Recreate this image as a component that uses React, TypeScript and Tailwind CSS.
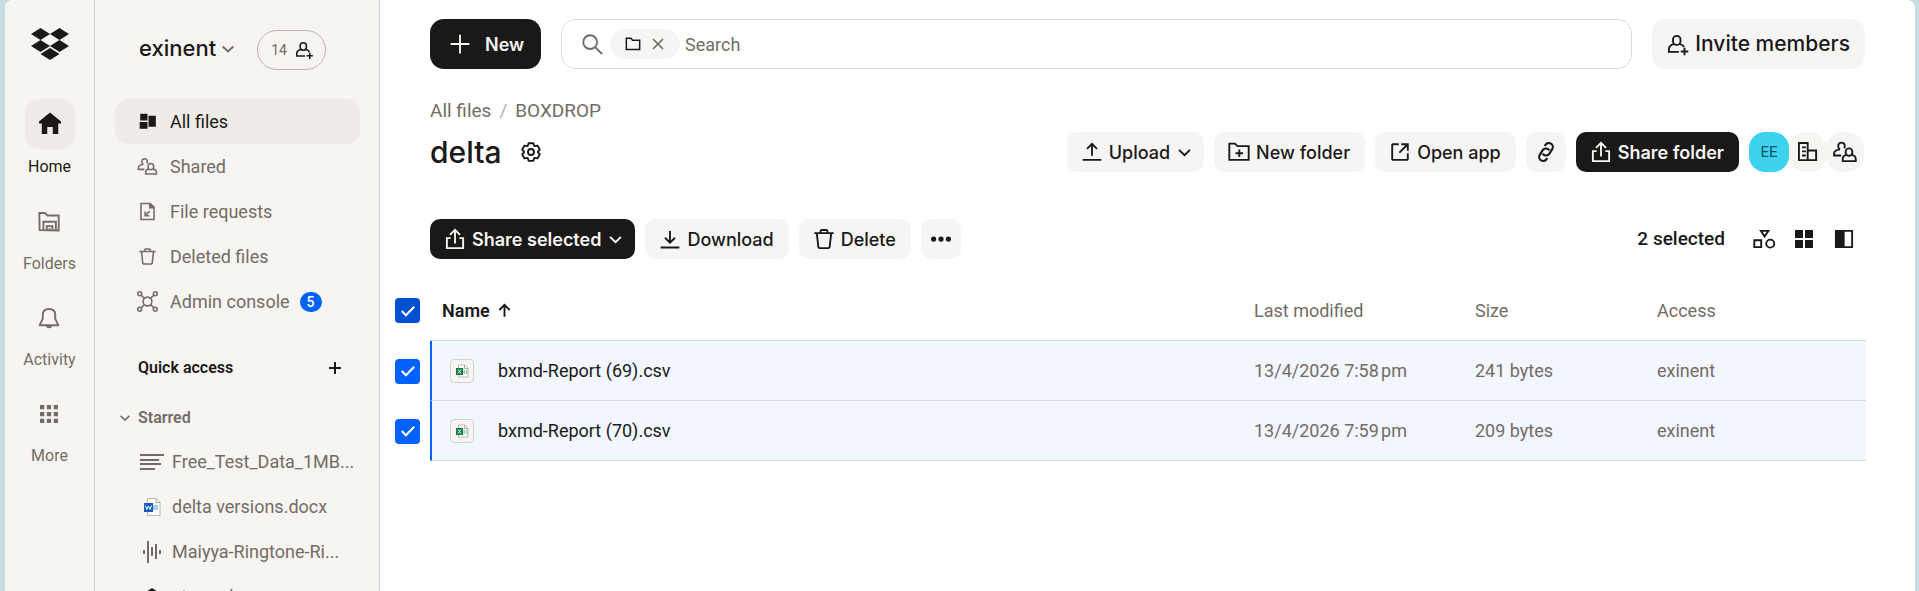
import { useState } from "react";
import type { ReactNode } from "react";

type IconProps = { className?: string; children?: ReactNode };

function Icon({ className = "size-[30px]", children }: IconProps) {
  return (
    <svg
      viewBox="0 0 24 24"
      fill="none"
      stroke="currentColor"
      strokeWidth="1.5"
      className={`shrink-0 ${className}`}
      aria-hidden="true"
    >
      {children}
    </svg>
  );
}

const gearPoints = Array.from({ length: 6 }, (_, i) => {
  const base = -90 + i * 60;
  return [
    [-27, 5.6],
    [-15, 7.3],
    [15, 7.3],
    [27, 5.6],
  ]
    .map(([offset, radius]) => {
      const angle = ((base + offset) * Math.PI) / 180;
      return `${(12 + radius * Math.cos(angle)).toFixed(2)},${(12 + radius * Math.sin(angle)).toFixed(2)}`;
    })
    .join(" ");
}).join(" ");

const GearIcon = () => (
  <Icon>
    <polygon points={gearPoints} strokeLinejoin="round" />
    <circle cx="12" cy="12" r="2.4" />
  </Icon>
);

const ShareIcon = () => (
  <Icon>
    <path d="M8.5 11.25H5.5v8h13v-8h-3M12 15.5V5M8 8.75l4-4 4 4" />
  </Icon>
);

const UploadIcon = () => (
  <Icon>
    <path d="M4.5 18.25h15M12 15V5.75M8 9.5l4-4 4 4" />
  </Icon>
);

const DownloadIcon = () => (
  <Icon>
    <path d="M4.5 18.75h15M12 5.5v9M8 11l4 4 4-4" />
  </Icon>
);

const NewFolderIcon = () => (
  <Icon>
    <path d="M4.25 18.25V5.25h4.5l2 2h9v11zM12.25 10v6M9.25 13h6" />
  </Icon>
);

const OpenIcon = () => (
  <Icon>
    <path d="M11 5.75H6.25l-.5.5v11.5l.5.5h11.5l.5-.5V13M13 5.75h5.25V11M18 6l-6.5 6.5" />
  </Icon>
);

const LinkIcon = () => (
  <Icon>
    <g transform="rotate(-58 12 12)" strokeWidth="1.7">
      <path d="M8.5 15.4H7.4a3.2 3.2 0 0 1 0-6.4h4.200a3.2 3.2 0 0 1 2.9 4.6" />
      <path d="M15.5 8.6h1.1a3.2 3.2 0 0 1 0 6.4h-4.2a3.2 3.2 0 0 1-2.9-4.6" />
    </g>
  </Icon>
);

const TrashIcon = ({ className }: IconProps) => (
  <Icon className={className}>
    <path d="M4.25 7.25h15.5M6.25 7.5l1.25 11 .75.75h7.5l.75-.75 1.25-11M9.25 7V5.5l.75-.75h4l.75.75V7" />
  </Icon>
);

const PeopleIcon = ({ className }: IconProps) => (
  <Icon className={className}>
    <path d="M8 10.1c-.9-.6-1.400-1.600-1.400-2.700 0-1.800 1-2.900 2.600-2.900s2.600 1.100 2.600 2.900c0 .7-.1 1.200-.4 1.700" />
    <path d="M9 14.750H3.250V13.400c0-1.900 1.600-3.100 4.400-3.300" />
    <rect x="12.500" y="9.100" width="5.400" height="6" rx="2.700" />
    <path d="M13.200 14.300c-1.900.4-3 1.500-3 3.200v1.750h10.400V17.500c0-1.700-1.200-2.800-3.100-3.200" />
  </Icon>
);

const PersonAddIcon = ({ className }: IconProps) => (
  <Icon className={className}>
    <rect x="8.800" y="5.500" width="6" height="7.200" rx="3" />
    <path d="M13.500 18.250h-8V16.500c0-2.300 1.500-3.900 4-4.400M14.200 12.100c1.700.3 2.900 1.100 3.500 2.400M18 15v6M15 18h6" />
  </Icon>
);

const BuildingIcon = () => (
  <Icon>
    <path d="M4.750 18.750V4.750h7v14M4.250 18.500h14.250v-7.750h-6.500M7.250 8.250h3M7.250 11.500h3M7.250 14.750h3" />
  </Icon>
);

const ChevronIcon = ({ className }: IconProps) => (
  <Icon className={className}>
    <path d="M6.750 9.500L12 14.500l5.250-5" strokeWidth="1.900" />
  </Icon>
);

const DropboxLogo = () => (
  <svg viewBox="0 0 38 32" className="h-8 w-[38px]" fill="currentColor" aria-hidden="true">
    <path d="M9.500 0L19 6l-9.500 6L0 6zM28.500 0L38 6l-9.500 6L19 6zM9.500 12L19 18l-9.500 6L0 18zM28.500 12L38 18l-9.500 6L19 18zM19 20l9.500 6L19 32l-9.500-6z" />
  </svg>
);

const HomeIcon = () => (
  <Icon>
    <path
      d="M12 2.800L3.200 10v1.500h2.200v8.400h4.400v-5.600h4.400v5.600h4.400v-8.400h2.200V10z"
      fill="currentColor"
      stroke="none"
    />
  </Icon>
);

const FoldersIcon = () => (
  <Icon>
    <path d="M4.500 18.500L4.250 4.750h4.500l2 2h9v12zM7.500 18.500v-6.750h10v6.750M10.250 18.500v-3.250h4.500v3.250" />
    <path d="M12.500 17v2" />
  </Icon>
);

const BellIcon = () => (
  <Icon>
    <path d="M4.500 17.750h15l-2.500-5V9.500c0-3-2-4.750-5-4.750S7 6.500 7 9.500v3.250z" strokeLinejoin="round" />
    <path d="M9.500 18h5c0 1.300-1 2.200-2.500 2.200S9.500 19.300 9.500 18z" fill="currentColor" stroke="none" />
  </Icon>
);

const MoreGridIcon = () => (
  <Icon>
    <path
      d="M4.800 4.800h3.400v3.400H4.800zM10.300 4.800h3.400v3.400h-3.400zM15.800 4.800h3.400v3.400h-3.400zM4.800 10.300h3.400v3.400H4.800zM10.300 10.300h3.400v3.400h-3.400zM15.800 10.300h3.400v3.400h-3.400zM4.800 15.800h3.400v3.400H4.800zM10.300 15.800h3.400v3.400h-3.400zM15.800 15.800h3.400v3.400h-3.400z"
      fill="currentColor"
      stroke="none"
    />
  </Icon>
);

const AllFilesIcon = () => (
  <Icon className="size-[25px]">
    <path
      d="M5 4.500h7v6.500H5zM13 6.500h7v10.500h-7zM4.500 12.500H12V19H4.500z"
      fill="currentColor"
      stroke="none"
    />
  </Icon>
);

const FileRequestIcon = () => (
  <Icon className="size-[25px]">
    <path d="M5.750 4.250h8.500l4 3.500v12H5.750zM14.250 11.500L10 15.750M9.750 12v4h4" />
    <path d="M13.500 4h1.500l3.500 3.500v1.500h-5z" fill="currentColor" stroke="none" />
  </Icon>
);

const AdminIcon = () => (
  <Icon className="size-[25px]">
    <circle cx="12" cy="12" r="4.200" />
    <circle cx="4.500" cy="4.500" r="1.900" />
    <circle cx="19.500" cy="4.500" r="1.900" />
    <circle cx="4.500" cy="19.500" r="1.900" />
    <circle cx="19.500" cy="19.500" r="1.900" />
    <path d="M6 6l3 3M18 6l-3 3M6 18l3-3M18 18l-3-3" />
  </Icon>
);

const TextFileIcon = () => (
  <svg viewBox="0 0 24 16" className="h-4 w-6 shrink-0" fill="currentColor" aria-hidden="true">
    <path d="M0 0h24v2H0zM0 5h19v2H0zM0 9h21v2H0zM0 14h15v2H0z" />
  </svg>
);

const WordIcon = () => (
  <svg viewBox="0 0 24 18" className="h-[18px] w-6 shrink-0" aria-hidden="true">
    <path d="M7.500.500h8.500l4 4v13H7.500z" fill="#fff" stroke="#b9b9b9" />
    <path d="M16 .500v4h4" fill="none" stroke="#a5a5a5" />
    <path d="M13 7h5v5h-5z" fill="#a9cdf3" />
    <rect x="4" y="5" width="9" height="9" fill="#185abd" />
    <path d="M5.500 7.500l1.300 4 1.700-3.500 1.700 3.500 1.300-4" fill="none" stroke="#fff" />
  </svg>
);

const AudioIcon = () => (
  <svg viewBox="0 0 24 22" className="h-[22px] w-6 shrink-0" fill="currentColor" aria-hidden="true">
    <path d="M3 9h2v4H3zM7 0h2v22H7zM11 6h2v9h-2zM15 3h2v15h-2zM19 9h2v4h-2z" />
  </svg>
);

const BoxIcon = () => (
  <svg viewBox="0 0 24 22" className="h-[22px] w-6 shrink-0 text-[#1a1918]" fill="currentColor" aria-hidden="true">
    <path d="M12 2l9 6v8l-9 6-9-6V8z" />
  </svg>
);

const SheetIcon = () => (
  <span className="flex size-6 items-center justify-center rounded border border-[#d6d3ce] bg-[#f7f5f2]">
    <svg viewBox="0 0 14 14" className="size-[14px]" aria-hidden="true">
      <path d="M3.500 1h6l3.500 3v9H3.500z" fill="#fff" stroke="#bbb" />
      <path d="M9.500 1v3.500H13" fill="none" stroke="#aaa" />
      <path d="M8.500 6h1.500v4H8.500zM11 6h1.500v4H11z" fill="#8fd0ab" />
      <rect x="1" y="4" width="7" height="7" fill="#107c41" />
      <path d="M3 5.500l3 4M6 5.500l-3 4" stroke="#fff" fill="none" />
    </svg>
  </span>
);

const railItems = [
  { label: "Folders", icon: <FoldersIcon /> },
  { label: "Activity", icon: <BellIcon /> },
  { label: "More", icon: <MoreGridIcon /> },
];

const navItems = [
  { label: "Shared", icon: <PeopleIcon className="size-[25px]" /> },
  { label: "File requests", icon: <FileRequestIcon /> },
  { label: "Deleted files", icon: <TrashIcon className="size-[25px]" /> },
  { label: "Admin console", icon: <AdminIcon />, badge: 5 },
];

const starredItems = [
  { label: "Free_Test_Data_1MB...", icon: <TextFileIcon /> },
  { label: "delta versions.docx", icon: <WordIcon /> },
  { label: "Maiyya-Ringtone-Ri...", icon: <AudioIcon /> },
  { label: "stround", icon: <BoxIcon /> },
];

const files = [
  { name: "bxmd-Report (69).csv", modified: "13/4/2026 7:58\u202fpm", size: "241 bytes", access: "exinent" },
  { name: "bxmd-Report (70).csv", modified: "13/4/2026 7:59\u202fpm", size: "209 bytes", access: "exinent" },
];

function Rail() {
  return (
    <nav className="flex w-[90px] shrink-0 flex-col items-center border-r border-[#cfcfcf] pt-7 text-base">
      <a href="#" aria-label="Dropbox" className="text-[#1a1918]">
        <DropboxLogo />
      </a>
      <a href="#" className="mt-[39px] flex flex-col items-center text-[#1a1918]">
        <span className="flex size-[50px] items-center justify-center rounded-[14px] bg-[#efece8]">
          <HomeIcon />
        </span>
        <span className="mt-1.5 leading-6">Home</span>
      </a>
      <div className="mt-7 flex flex-col gap-[15px]">
        {railItems.map((item) => (
          <a key={item.label} href="#" className="flex flex-col items-center text-[#736c64]">
            {item.icon}
            <span className="mt-[15px] pb-3 leading-6">{item.label}</span>
          </a>
        ))}
      </div>
    </nav>
  );
}

function Sidebar() {
  return (
    <aside className="flex w-[285px] shrink-0 flex-col border-r border-[#cfcfcf] pr-[19px] pl-5 text-[18px] text-[#736c64]">
      <div className="flex h-[99px] shrink-0 items-center pl-6">
        <button className="flex items-center pb-0.5 font-[Inter,sans-serif] text-[22px] font-medium text-[#1a1918]">
          exinent
          <ChevronIcon className="size-6 text-[#736c64]" />
        </button>
        <button className="mr-[34px] ml-auto flex h-10 w-[69px] items-center justify-center gap-1 rounded-full border border-[#bdb5ad] pl-1 text-sm">
          14
          <PersonAddIcon className="size-[25px] text-[#1a1918]" />
        </button>
      </div>
      <a
        href="#"
        className="flex h-[45px] shrink-0 items-center gap-2.5 rounded-[14px] bg-[#efece8] pl-5 text-[#1a1918]"
      >
        <AllFilesIcon />
        All files
      </a>
      {navItems.map((item) => (
        <a key={item.label} href="#" className="flex h-[45px] shrink-0 items-center gap-2.5 pl-5">
          {item.icon}
          {item.label}
          {item.badge && (
            <span className="flex h-5 w-[22px] items-center justify-center rounded-full bg-[#0061fe] text-sm font-medium text-white">
              {item.badge}
            </span>
          )}
        </a>
      ))}
      <div className="mt-[21px] flex h-[45px] shrink-0 items-center justify-between pr-[13px] pl-[23px] text-[#1a1918]">
        <h2 className="text-base font-semibold">Quick access</h2>
        <button aria-label="Add to quick access">
          <Icon className="size-6">
            <path d="M12 6v12M6 12h12" strokeWidth="2" />
          </Icon>
        </button>
      </div>
      <button className="mt-[5px] flex h-[45px] shrink-0 items-center gap-[3px] text-base font-semibold">
        <ChevronIcon className="size-5" />
        Starred
      </button>
      <div className="-mt-px flex flex-col">
        {starredItems.map((item) => (
          <a key={item.label} href="#" className="flex h-[45px] shrink-0 items-center gap-2 pl-[25px]">
            {item.icon}
            {item.label}
          </a>
        ))}
      </div>
    </aside>
  );
}

type ButtonProps = { dark?: boolean; children: ReactNode };

function ToolButton({ dark, children }: ButtonProps) {
  return (
    <button
      className={`flex h-10 items-center gap-0.5 rounded-[10px] pr-[15px] pl-2.5 font-[Inter,sans-serif] text-[18px] ${
        dark ? "bg-[#1a1918] font-semibold text-[#f7f5f2]" : "bg-[#f6f5f3] font-medium text-[#1a1918]"
      }`}
    >
      {children}
    </button>
  );
}

type CheckboxProps = { label: string; checked: boolean; dark?: boolean; onChange: () => void };

function Checkbox({ label, checked, dark, onChange }: CheckboxProps) {
  return (
    <span className="grid size-[25px] place-items-center">
      <input
        type="checkbox"
        aria-label={label}
        checked={checked}
        onChange={onChange}
        className={`col-start-1 row-start-1 size-[25px] appearance-none rounded border border-[#bdb5ad] checked:border-transparent ${
          dark ? "checked:bg-[#0050d0]" : "checked:bg-[#0061fe]"
        }`}
      />
      {checked && (
        <Icon className="pointer-events-none col-start-1 row-start-1 size-5 text-white">
          <path d="M4.500 12l5 5L19.500 7" strokeWidth="2.500" />
        </Icon>
      )}
    </span>
  );
}

function FileTable({ selected, setSelected }: { selected: string[]; setSelected: (names: string[]) => void }) {
  const allSelected = selected.length === files.length;

  const toggle = (name: string) => {
    setSelected(selected.includes(name) ? selected.filter((n) => n !== name) : [...selected, name]);
  };

  return (
    <table className="mt-[21px] w-full table-fixed border-separate border-spacing-0 text-left text-[18px] text-[#736c64]">
      <colgroup>
        <col className="w-[35px]" />
        <col />
        <col className="w-[221px]" />
        <col className="w-[182px]" />
        <col className="w-[209px]" />
      </colgroup>
      <thead>
        <tr className="h-[61px]">
          <th>
            <Checkbox
              dark
              label="Select all"
              checked={allSelected}
              onChange={() => setSelected(allSelected ? [] : files.map((f) => f.name))}
            />
          </th>
          <th className="border-b border-[#d9d9d9] pl-3">
            <button className="flex items-center gap-0.5 font-semibold text-[#1a1918]">
              Name
              <Icon className="size-[25px]">
                <path d="M12 18V6.500M7 11.500l5-5 5 5" strokeWidth="1.800" />
              </Icon>
            </button>
          </th>
          <th className="border-b border-[#d9d9d9] font-normal">Last modified</th>
          <th className="border-b border-[#d9d9d9] font-normal">Size</th>
          <th className="border-b border-[#d9d9d9] font-normal">Access</th>
        </tr>
      </thead>
      <tbody>
        {files.map((file) => {
          const checked = selected.includes(file.name);
          const cell = `border-b border-[#d9d9d9] ${checked ? "bg-[#f1f6ff]" : ""}`;
          return (
            <tr key={file.name} className="h-[60px]">
              <td>
                <Checkbox label={`Select ${file.name}`} checked={checked} onChange={() => toggle(file.name)} />
              </td>
              <td className={`${cell} border-l-2 pl-[18px] ${checked ? "border-l-[#0061fe]" : "border-l-transparent"}`}>
                <a href="#" className="flex items-center gap-6 text-[#1a1918]">
                  <SheetIcon />
                  {file.name}
                </a>
              </td>
              <td className={cell}>{file.modified}</td>
              <td className={cell}>{file.size}</td>
              <td className={cell}>{file.access}</td>
            </tr>
          );
        })}
      </tbody>
    </table>
  );
}

function App() {
  const [selected, setSelected] = useState(files.map((f) => f.name));

  return (
    <div className="h-screen overflow-hidden bg-[#c6dde2] pr-1 pl-[5px] font-[Roboto,sans-serif]">
      <div className="flex h-full overflow-hidden rounded-t-lg bg-white">
        <div className="flex shrink-0 bg-[#f7f5f2]">
          <Rail />
          <Sidebar />
        </div>

        <main className="min-w-0 flex-1 pt-[19px] pr-[49px] pl-[15px] text-[#1a1918]">
          <div className="flex gap-5 pl-[35px]">
            <button className="flex h-[50px] w-[111px] items-center gap-2.5 rounded-[14px] bg-[#1a1918] pl-[15px] font-[Inter,sans-serif] text-[18px] font-semibold text-[#f7f5f2]">
              <Icon>
                <path d="M12 4.500v15M4.500 12h15" />
              </Icon>
              New
            </button>
            <div className="flex h-[50px] flex-1 items-center rounded-[14px] border border-[#dadada] pl-[15px]">
              <Icon className="size-[30px] text-[#736c64]">
                <circle cx="10.500" cy="10.500" r="5.500" />
                <path d="M14.500 14.500l5.500 5.500" />
              </Icon>
              <span className="ml-[3px] flex h-[30px] w-[70px] shrink-0 items-center justify-center gap-[5px] rounded-full bg-[#f6f5f3]">
                <Icon className="size-5">
                  <path d="M4 18.500V5h5.500l2 2.500h8.500V18.500z" strokeWidth="1.800" />
                </Icon>
                <button aria-label="Clear folder filter">
                  <Icon className="size-5 text-[#736c64]">
                    <path d="M6 6l12 12M18 6L6 18" strokeWidth="2" />
                  </Icon>
                </button>
              </span>
              <input
                type="text"
                aria-label="Search"
                placeholder="Search"
                className="ml-[5px] min-w-0 flex-1 text-[18px] outline-none placeholder:text-[#736c64]"
              />
            </div>
            <button className="mr-px flex h-[50px] items-center gap-[3px] rounded-[14px] bg-[#f6f5f3] pr-[15px] pl-2.5 font-[Inter,sans-serif] text-[21px] font-medium">
              <PersonAddIcon />
              Invite members
            </button>
          </div>

          <div className="mt-[30px] flex h-6 items-center gap-2 pl-[35px] text-[19px] text-[#736c64]">
            <a href="#">All files</a>
            <span className="text-[#b5b0aa]">/</span>
            <a href="#">BOXDROP</a>
          </div>

          <div className="mt-[9px] flex h-10 items-center pl-[35px]">
            <h1 className="font-[Inter,sans-serif] text-[30px] leading-10 font-medium">delta</h1>
            <button aria-label="Folder settings" className="ml-[14px]">
              <GearIcon />
            </button>
            <div className="ml-auto flex gap-2.5 pr-0.5">
              <ToolButton>
                <UploadIcon />
                Upload
                <ChevronIcon className="-mr-2 size-[25px]" />
              </ToolButton>
              <ToolButton>
                <NewFolderIcon />
                New folder
              </ToolButton>
              <ToolButton>
                <OpenIcon />
                Open app
              </ToolButton>
              <button
                aria-label="Copy link"
                className="flex size-10 items-center justify-center rounded-[10px] bg-[#f6f5f3]"
              >
                <LinkIcon />
              </button>
              <ToolButton dark>
                <ShareIcon />
                Share folder
              </ToolButton>
              <div className="flex">
                <span className="flex size-10 items-center justify-center rounded-2xl bg-[#3dd3ee] text-[15px] text-[#055463]">
                  EE
                </span>
                <span className="flex h-10 w-[37px] items-center justify-center rounded-2xl bg-[#f7f5f2]">
                  <BuildingIcon />
                </span>
                <span className="flex h-10 w-[38px] items-center justify-center rounded-2xl bg-[#f6f5f3]">
                  <PeopleIcon />
                </span>
              </div>
            </div>
          </div>

          <div className="mt-[47px] flex h-10 items-center gap-2.5 pl-[35px]">
            <ToolButton dark>
              <ShareIcon />
              Share selected
              <ChevronIcon className="-mr-2 size-[25px]" />
            </ToolButton>
            <ToolButton>
              <DownloadIcon />
              Download
            </ToolButton>
            <ToolButton>
              <TrashIcon />
              Delete
            </ToolButton>
            <button
              aria-label="More actions"
              className="flex size-10 items-center justify-center rounded-[10px] bg-[#f6f5f3]"
            >
              <Icon>
                <path
                  d="M4 12a2.100 2.100 0 1 0 4.200 0 2.100 2.100 0 1 0-4.200 0M9.900 12a2.100 2.100 0 1 0 4.200 0 2.100 2.100 0 1 0-4.200 0M15.800 12a2.100 2.100 0 1 0 4.200 0 2.100 2.100 0 1 0-4.200 0"
                  fill="currentColor"
                  stroke="none"
                />
              </Icon>
            </button>
            <div className="ml-auto flex items-center gap-2.5 pr-[7px]">
              <span className="mr-[14px] text-[19px] font-medium">{selected.length} selected</span>
              <button aria-label="Sort by type">
                <Icon>
                  <path d="M4.250 13h5.500v5.500h-5.500zM9.500 5.500h6l-3 4.500z" />
                  <circle cx="17" cy="15.700" r="3.200" />
                </Icon>
              </button>
              <button aria-label="Grid view">
                <Icon>
                  <path
                    d="M4.800 4.800h6.400v6.400H4.800zM12.800 4.800h6.400v6.400h-6.400zM4.800 12.800h6.400v6.400H4.800zM12.800 12.800h6.400v6.400h-6.400z"
                    fill="currentColor"
                    stroke="none"
                  />
                </Icon>
              </button>
              <button aria-label="Toggle details">
                <Icon>
                  <path d="M5.500 5.500h13v13h-13z" />
                  <path d="M5 5h7.500v14H5z" fill="currentColor" stroke="none" />
                </Icon>
              </button>
            </div>
          </div>

          <FileTable selected={selected} setSelected={setSelected} />
        </main>
      </div>
    </div>
  );
}

export default App;
